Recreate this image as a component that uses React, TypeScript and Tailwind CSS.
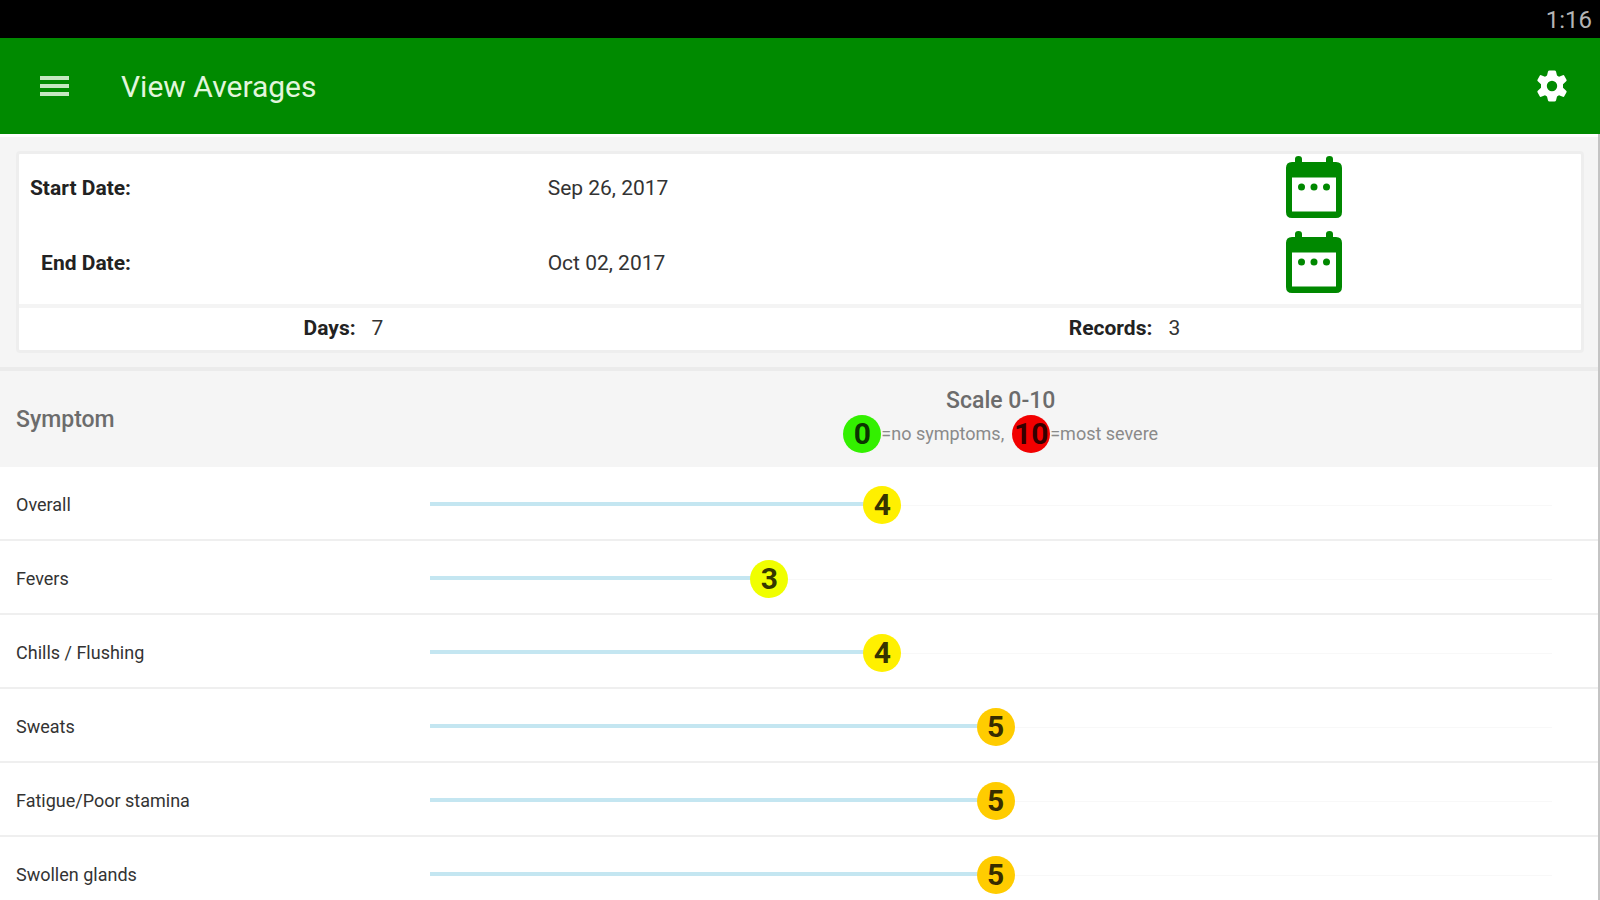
import { useState } from 'react';

type Symptom = { name: string; value: number };

const symptoms: Symptom[] = [
  { name: 'Overall', value: 4 },
  { name: 'Fevers', value: 3 },
  { name: 'Chills / Flushing', value: 4 },
  { name: 'Sweats', value: 5 },
  { name: 'Fatigue/Poor stamina', value: 5 },
  { name: 'Swollen glands', value: 5 },
];

// severity colours, index is the score
const levels = [
  '#33f000', '#80f800', '#c0ff00', '#f0ff00', '#fff000', '#ffcc00',
  '#ffa800', '#ff8000', '#ff5000', '#fa2000', '#f20000',
];

function CalendarIcon() {
  return (
    <svg width="58" height="64" viewBox="0 0 58 64" fill="currentColor">
      <path
        fillRule="evenodd"
        d="M10 7V4q0-3 3.500-3T17 4v3h24V4q0-3 3.500-3T48 4v3h3q6 0 6 6v44q0 6-6 6H7q-6 0-6-6V13q0-6 6-6zM7 22.500V56.500h44V22.500z"
      />
      <circle cx="16.500" cy="32" r="3.500" />
      <circle cx="29" cy="32" r="3.500" />
      <circle cx="41.500" cy="32" r="3.500" />
    </svg>
  );
}

function Badge({ value }: { value: number }) {
  return (
    <span
      className="flex size-[38px] items-center justify-center rounded-full text-[30px] leading-none font-bold text-black/80"
      style={{ backgroundColor: levels[value] }}
    >
      {value}
    </span>
  );
}

function DateRow({ id, label, value }: { id: string; label: string; value: string }) {
  return (
    <div className="grid h-[68px] grid-cols-3 items-center text-[21px] leading-6">
      <span id={id} className="w-28 text-right font-bold text-[#222]">{label}</span>
      <span aria-labelledby={id} className="pl-2 text-[#333]">{value}</span>
      <div className="flex justify-center pr-3.5 pb-0.5">
        <button type="button" aria-label={`Pick ${label}`} className="text-[#008800]">
          <CalendarIcon />
        </button>
      </div>
    </div>
  );
}

function SymptomRow({ name, value: average }: Symptom) {
  const [value, setValue] = useState(average);

  return (
    <label className="flex h-[74px] items-center border-b-2 border-[#efefef] pt-1 pr-[18px]">
      <span className="w-1/4 pl-4 text-[18px] leading-6 text-[#333]">{name}</span>
      <span className="relative ml-4 block h-[38px] flex-1">
        <span className="absolute right-7 left-[19px] top-1/2 block h-px bg-[#f8f8f8]" />
        <span className="absolute inset-x-[19px] top-4 block h-1">
          <span className="block h-1 bg-[#c4e6f1]" style={{ width: `${value * 10}%` }} />
        </span>
        <input
          type="range"
          min={0}
          max={10}
          value={value}
          onChange={(e) => setValue(Number(e.target.value))}
          className="absolute inset-0 m-0 h-[38px] w-full cursor-pointer appearance-none bg-transparent opacity-0 [&::-webkit-slider-thumb]:size-[38px] [&::-webkit-slider-thumb]:appearance-none"
        />
        <span className="pointer-events-none absolute inset-x-[19px] inset-y-0">
          <span className="absolute block -translate-x-1/2" style={{ left: `${value * 10}%` }}>
            <Badge value={value} />
          </span>
        </span>
      </span>
    </label>
  );
}

export default function App() {
  return (
    <div className="h-screen overflow-hidden bg-white font-['Roboto',sans-serif]">
      {/* Status bar */}
      <div className="flex h-[38px] items-center justify-end bg-black pt-0.5 pr-2 text-[24px] leading-none text-[#b4b4b4]">
        1:16
      </div>

      {/* App bar */}
      <header className="flex h-24 items-center bg-[#008a00] pt-0.5 pr-[30px] pl-10 text-white">
        <button type="button" aria-label="Menu" className="text-[#c4e8c0]">
          <svg width="29" height="22" viewBox="0 0 29 22" fill="currentColor">
            <rect y="0" width="29" height="4" />
            <rect y="8" width="29" height="4" />
            <rect y="16" width="29" height="4" />
          </svg>
        </button>
        <h1 className="ml-[52px] flex-1 text-[30px] leading-9 text-[#e2f6dc]">View Averages</h1>
        <button type="button" aria-label="Settings">
          {/* six-tooth cog */}
          <svg width="36" height="36" viewBox="-18 -17 36 36" fill="currentColor">
            <path
              fillRule="evenodd"
              d="M-2.500-15.500h5q1.200 0 1.500 1l1 4 2 1.200 3.800-1.500q1-.4 1.500.5l2.200 4q.5.900-.3 1.500L11-1.800v3.600l3.200 3q.8.600.3 1.500l-2.200 4q-.5.900-1.500.5L7 9.300l-2 1.200-1 4q-.3 1-1.500 1h-5q-1.200 0-1.500-1l-1-4-2-1.200-3.800 1.500q-1 .4-1.500-.5l-2.200-4q-.5-.9.300-1.500l3.200-3v-3.600l-3.200-3q-.8-.6-.3-1.500l2.200-4q.5-.9 1.500-.5l3.800 1.500 2-1.200 1-4q.3-1 1.500-1zM0-5.200a5.200 5.200 0 1 0 0 10.400a5.200 5.200 0 1 0 0-10.400z"
            />
          </svg>
        </button>
      </header>

      <main className="border-r-2 border-[#c4c4c4]">
        {/* Date range */}
        <section className="border-t-3 border-b-4 border-t-white border-b-[#ebebeb] bg-[#f5f5f5] py-3.5 pr-3.5 pl-4">
          <div className="rounded-sm border-3 border-[#eeeeee] bg-white">
            <div className="flex flex-col gap-[7px] pb-[7px]">
              <DateRow id="start" label="Start Date:" value="Sep 26, 2017" />
              <DateRow id="end" label="End Date:" value="Oct 02, 2017" />
            </div>
            <div className="grid h-[46px] grid-cols-2 border-t-4 border-[#f4f4f4] text-[21px] leading-6 text-[#333]">
              <p className="flex items-center justify-center gap-4 pr-[132px] pb-0.5">
                <b className="text-[#222]">Days:</b>7
              </p>
              <p className="flex items-center justify-center gap-4 pr-[132px] pb-0.5">
                <b className="text-[#222]">Records:</b>3
              </p>
            </div>
          </div>
        </section>

        {/* List heading */}
        <section className="flex h-24 items-center bg-[#f5f5f5] pt-0.5 font-medium text-[#6c6c6c]">
          <h2 className="w-1/4 pl-4 text-[23px] leading-7">Symptom</h2>
          <div className="flex flex-1 flex-col items-center pl-1">
            <p className="text-[23px] leading-7">Scale 0-10</p>
            <p className="flex items-center text-[18px] leading-6 font-normal text-[#8a8a8a]">
              <Badge value={0} />
              <span className="mr-2">=no symptoms,</span>
              <Badge value={10} />
              <span>=most severe</span>
            </p>
          </div>
        </section>

        {symptoms.map((s) => (
          <SymptomRow key={s.name} name={s.name} value={s.value} />
        ))}
      </main>
    </div>
  );
}
